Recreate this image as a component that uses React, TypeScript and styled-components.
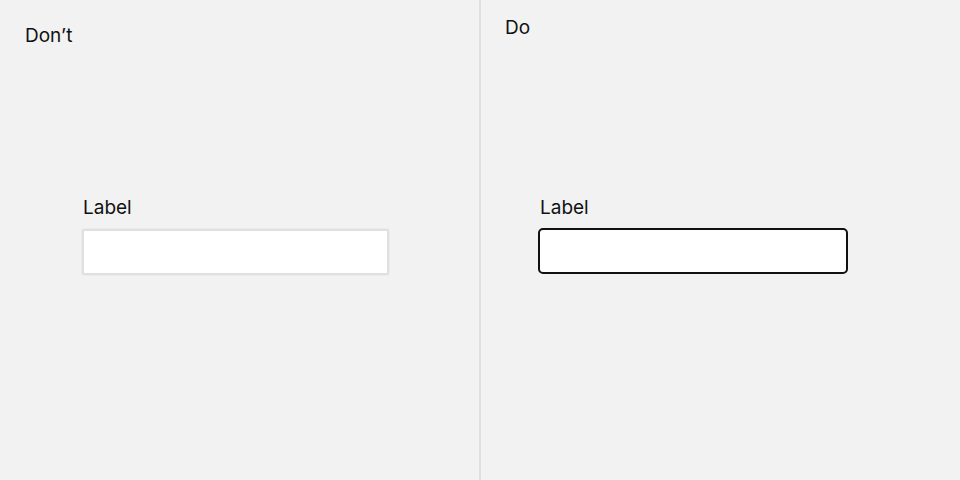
import React from "react";
import styled, { createGlobalStyle } from "styled-components";

const Global = createGlobalStyle`
  html, body { margin: 0; padding: 0; }
  body {
    background: #f2f2f2;
    font-family: Inter, "Noto Sans", sans-serif;
    color: #111;
  }
`;

const Page = styled.div`
  display: flex;
  width: 960px;
  height: 480px;
  background: #f2f2f2;
`;

const Panel = styled.section<{ $top: number; $left: number; $width: number }>`
  box-sizing: border-box;
  width: ${(p) => p.$width}px;
  height: 480px;
  padding: ${(p) => p.$top}px 0 0 ${(p) => p.$left}px;
  display: flex;
  flex-direction: column;
`;

const Divider = styled.div`
  width: 2px;
  height: 480px;
  background: #e0e0e0;
`;

const Title = styled.div`
  font-size: 19px;
  line-height: 23px;
  font-weight: 400;
  color: #111;
`;

const Field = styled.div<{ $top: number; $left: number }>`
  display: flex;
  flex-direction: column;
  margin-top: ${(p) => p.$top}px;
  margin-left: ${(p) => p.$left}px;
`;

const Label = styled.label<{ $gap: number; $indent: number }>`
  font-size: 19px;
  line-height: 23px;
  font-weight: 400;
  color: #111;
  padding-left: ${(p) => p.$indent}px;
  margin-bottom: ${(p) => p.$gap}px;
`;

const Input = styled.input<{ $variant: "weak" | "strong" }>`
  box-sizing: border-box;
  display: block;
  margin: 0;
  padding: 0 12px;
  background: #fff;
  font-family: Inter, sans-serif;
  font-size: 16px;
  outline: none;
  width: ${(p) => (p.$variant === "weak" ? 307 : 310)}px;
  height: 46px;
  border: 2px solid ${(p) => (p.$variant === "weak" ? "#e0e0e0" : "#111")};
  border-radius: ${(p) => (p.$variant === "weak" ? 2 : 5)}px;
  box-shadow: ${(p) =>
    p.$variant === "weak" ? "0 0 1px 1px rgba(0, 0, 0, 0.03)" : "none"};
`;

export default function App() {
  return (
    <>
      <Global />
      <Page>
        <Panel $top={24} $left={25} $width={479}>
          <Title>Don’t</Title>
          <Field $top={149} $left={57}>
            <Label $gap={10} $indent={1}>Label</Label>
            <Input $variant="weak" aria-label="Label" />
          </Field>
        </Panel>
        <Divider />
        <Panel $top={16} $left={24} $width={479}>
          <Title>Do</Title>
          <Field $top={157} $left={33}>
            <Label $gap={9} $indent={2}>Label</Label>
            <Input $variant="strong" aria-label="Label" />
          </Field>
        </Panel>
      </Page>
    </>
  );
}
